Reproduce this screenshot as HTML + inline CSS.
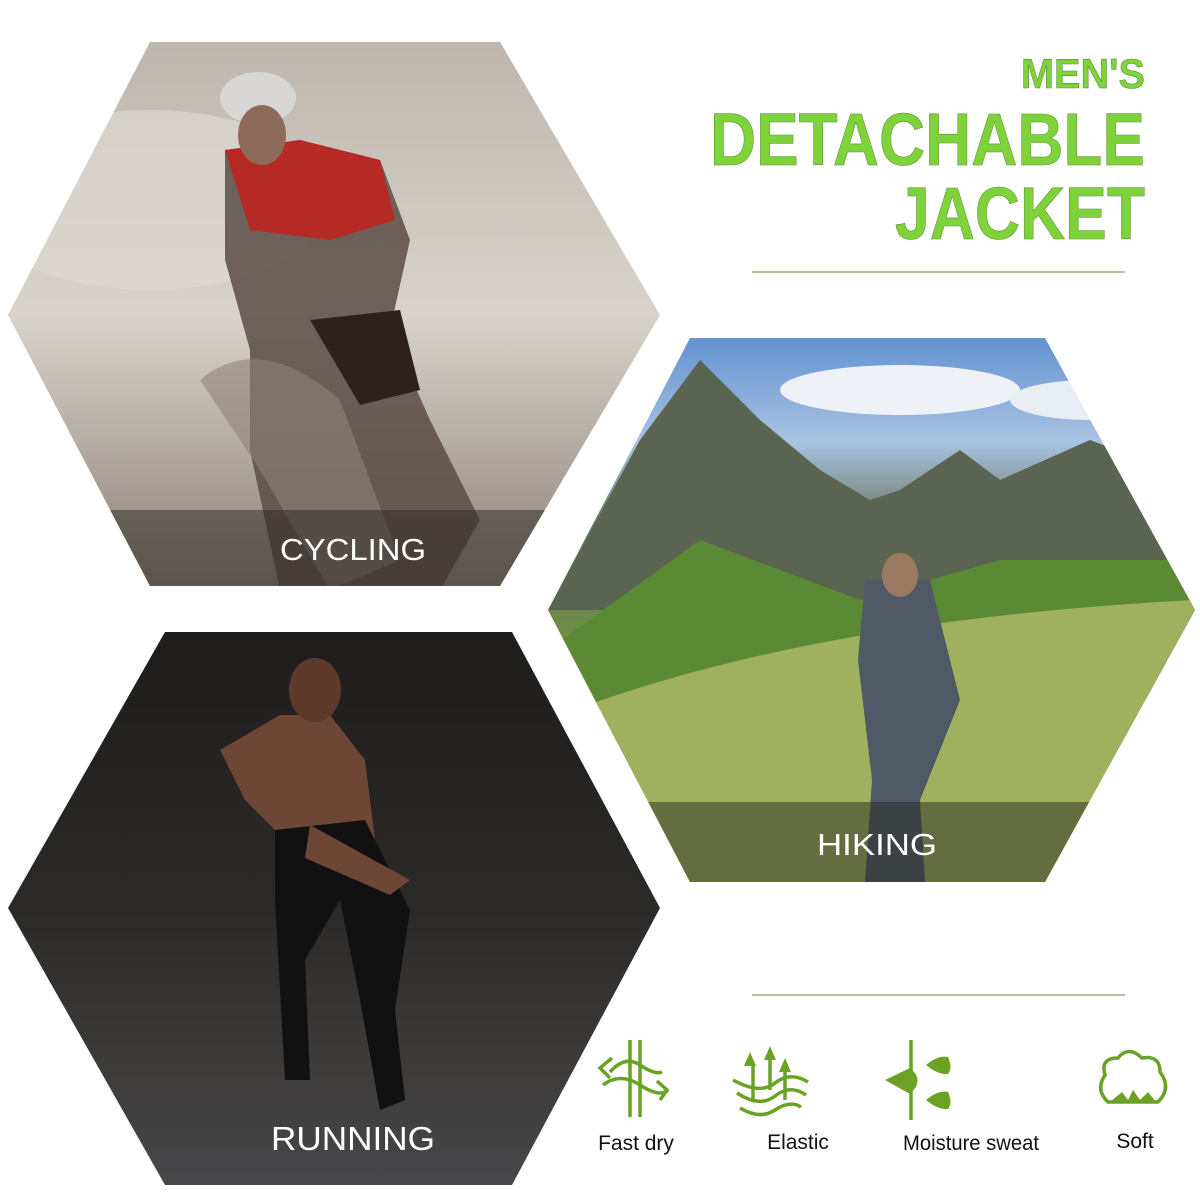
<!DOCTYPE html>
<html><head><meta charset="utf-8"><style>
html,body{margin:0;padding:0;background:#fff;}
svg{display:block;}
</style></head><body>
<svg width="1200" height="1200" viewBox="0 0 1200 1200" xmlns="http://www.w3.org/2000/svg" font-family="Liberation Sans, sans-serif">
<defs>
<clipPath id="h1"><polygon points="150,42 500,42 660,315 500,586 150,586 8,315"/></clipPath>
<clipPath id="h2"><polygon points="690,338 1045,338 1195,610 1045,882 690,882 548,610"/></clipPath>
<clipPath id="h3"><polygon points="165,632 512,632 660,908 512,1185 165,1185 8,908"/></clipPath>
<linearGradient id="g1" x1="0" y1="0" x2="0" y2="1">
<stop offset="0" stop-color="#bdb6ae"/><stop offset=".5" stop-color="#d8d3cc"/><stop offset="1" stop-color="#8a8078"/></linearGradient>
<linearGradient id="g2" x1="0" y1="0" x2="0" y2="1">
<stop offset="0" stop-color="#5d8ed0"/><stop offset=".2" stop-color="#a9c3e2"/><stop offset=".35" stop-color="#6a7660"/><stop offset=".55" stop-color="#6d8f45"/><stop offset=".8" stop-color="#a8b56c"/><stop offset="1" stop-color="#8f9870"/></linearGradient>
<linearGradient id="g3" x1="0" y1="0" x2="0" y2="1">
<stop offset="0" stop-color="#1e1d1c"/><stop offset=".5" stop-color="#2c2a28"/><stop offset=".75" stop-color="#3c3a38"/><stop offset="1" stop-color="#48474a"/></linearGradient>
</defs>

<!-- Cycling -->
<g clip-path="url(#h1)">
<rect x="0" y="40" width="670" height="550" fill="url(#g1)"/>
<ellipse cx="150" cy="200" rx="180" ry="90" fill="#ddd8d2" opacity=".7"/>
<path d="M225,150 L300,140 L380,160 L410,240 L390,330 L430,420 L480,520 L440,590 L280,590 L250,450 L250,350 L225,260 Z" fill="#5a4c46" opacity=".85"/>
<path d="M225,150 L300,140 L380,160 L395,220 L330,240 L250,230 Z" fill="#b52a24"/>
<path d="M310,320 L400,310 L420,390 L360,405 Z" fill="#2d2120"/>
<ellipse cx="258" cy="98" rx="38" ry="26" fill="#d9d7d6"/>
<ellipse cx="262" cy="135" rx="24" ry="30" fill="#8c6b5a"/>
<path d="M200,380 Q260,330 340,400 L400,560 L330,590 L260,470 Z" fill="#8e827a" opacity=".6"/>
<rect x="0" y="510" width="670" height="80" fill="#2b2724" opacity=".5"/>
</g>
<text x="353" y="560" font-size="31" fill="#fff" text-anchor="middle" textLength="146" lengthAdjust="spacingAndGlyphs">CYCLING</text>

<!-- Hiking -->
<g clip-path="url(#h2)">
<rect x="540" y="330" width="670" height="560" fill="url(#g2)"/>
<ellipse cx="900" cy="390" rx="120" ry="25" fill="#eef2f6"/>
<ellipse cx="1090" cy="400" rx="80" ry="20" fill="#e8eef4"/>
<path d="M548,610 L640,440 L700,360 L760,420 L820,470 L870,500 L900,490 L960,450 L1000,480 L1090,440 L1195,480 L1195,610 Z" fill="#5b6450"/>
<path d="M548,650 L700,540 L860,600 L1000,560 L1195,560 L1195,700 L548,720 Z" fill="#5c8a34"/>
<path d="M548,720 Q800,620 1195,600 L1195,882 L548,882 Z" fill="#9fb05e"/>
<path d="M865,580 L930,580 L960,700 L920,800 L925,882 L865,882 L872,780 L858,660 Z" fill="#4f5a66"/>
<ellipse cx="900" cy="575" rx="18" ry="22" fill="#9a7a62"/>
<rect x="0" y="802" width="1200" height="80" fill="#2a2a22" opacity=".5"/>
</g>
<text x="877" y="855" font-size="31" fill="#fff" text-anchor="middle" textLength="120" lengthAdjust="spacingAndGlyphs">HIKING</text>

<!-- Running -->
<g clip-path="url(#h3)">
<rect x="0" y="630" width="670" height="560" fill="url(#g3)"/>
<path d="M220,750 L280,715 L330,715 L365,760 L375,840 L355,880 L300,855 L245,800 Z" fill="#6e4636"/>
<ellipse cx="315" cy="690" rx="26" ry="32" fill="#5e3a2c"/>
<path d="M275,830 L365,820 L410,910 L395,1010 L405,1100 L380,1110 L360,1000 L340,900 L305,960 L310,1080 L285,1080 L275,900 Z" fill="#121112"/>
<path d="M310,825 L410,880 L390,895 L305,858 Z" fill="#6e4636"/>
</g>
<text x="353" y="1150" font-size="33" fill="#fff" text-anchor="middle" textLength="164" lengthAdjust="spacingAndGlyphs">RUNNING</text>

<!-- Title -->
<g fill="#7ed33b" stroke="#5e8a3a" stroke-width=".6" font-weight="bold">
<text x="1145" y="88" font-size="42" text-anchor="end" textLength="124" lengthAdjust="spacingAndGlyphs">MEN'S</text>
<text x="1145" y="165" font-size="74" text-anchor="end" textLength="435" lengthAdjust="spacingAndGlyphs">DETACHABLE</text>
<text x="1145" y="239" font-size="74" text-anchor="end" textLength="250" lengthAdjust="spacingAndGlyphs">JACKET</text>
</g>
<line x1="752" y1="272" x2="1125" y2="272" stroke="#b6c09a" stroke-width="2"/>
<line x1="752" y1="995" x2="1125" y2="995" stroke="#b6c09a" stroke-width="2"/>

<!-- Icons -->
<g fill="none" stroke="#6aa324" stroke-width="3.5">
<line x1="630" y1="1040" x2="630" y2="1117"/><line x1="640" y1="1040" x2="640" y2="1117"/>
<path d="M610,1072 Q625,1055 640,1065 T662,1072"/>
<path d="M603,1085 Q620,1072 640,1085 T668,1090"/>
<path d="M612,1058 L600,1068 L610,1078"/>
<path d="M657,1081 L667,1090 L660,1100"/>
<path d="M733,1080 Q760,1095 775,1083 T808,1082"/>
<path d="M737,1093 Q760,1108 775,1096 T806,1095"/>
<path d="M740,1108 Q760,1120 775,1110 T801,1107"/>
<line x1="753" y1="1064" x2="753" y2="1102"/><line x1="770" y1="1055" x2="770" y2="1090"/><line x1="785" y1="1065" x2="785" y2="1100"/>
<line x1="911" y1="1040" x2="911" y2="1120"/>
<path d="M1108,1102 Q1095,1090 1105,1075 Q1100,1058 1118,1058 Q1128,1045 1142,1058 Q1160,1055 1160,1072 Q1172,1088 1158,1102 Z"/>
</g>
<g fill="#6aa324">
<path d="M750,1052 L756,1066 L744,1066 Z"/><path d="M770,1046 L776,1060 L764,1060 Z"/><path d="M785,1058 L791,1072 L779,1072 Z"/>
<path d="M885,1080 L910,1068 Q925,1080 910,1094 Z"/>
<path d="M926,1065 Q938,1055 948,1057 Q953,1068 948,1074 Q938,1075 926,1065 Z"/>
<path d="M926,1100 Q938,1090 948,1092 Q953,1103 948,1109 Q938,1110 926,1100 Z"/>
<path d="M1110,1102 L1122,1092 L1128,1100 L1133,1090 L1140,1100 L1148,1092 L1156,1102 Z"/>
</g>

<g font-size="21" fill="#111" text-anchor="middle">
<text x="636" y="1150">Fast dry</text>
<text x="798" y="1149">Elastic</text>
<text x="971" y="1150" textLength="136" lengthAdjust="spacingAndGlyphs">Moisture sweat</text>
<text x="1135" y="1148">Soft</text>
</g>
</svg>
</body></html>
